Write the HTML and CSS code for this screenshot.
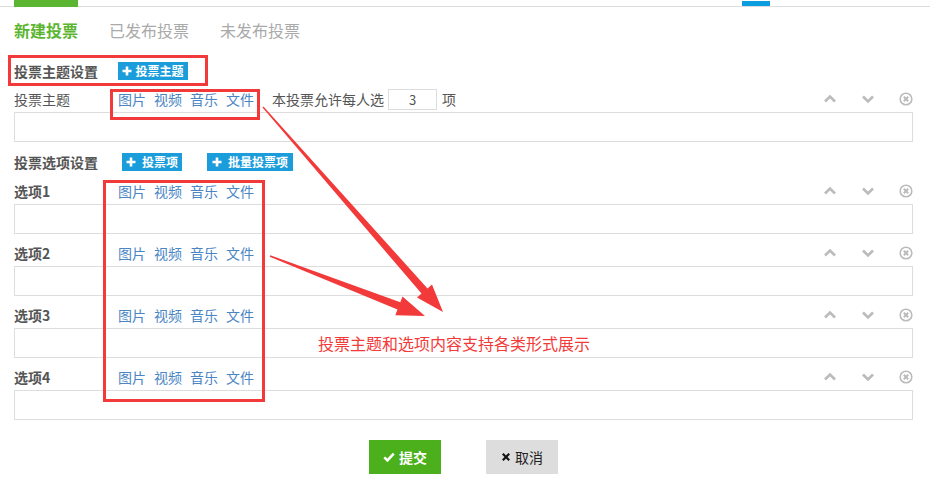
FILE: index.html
```html
<!DOCTYPE html>
<html lang="zh-CN">
<head>
  <meta charset="UTF-8" />
  <title>新建投票</title>
  <link rel="stylesheet" href="styles.css">
</head>
<body>
  <div class="page">
    <span class="stray-bar"></span>
    <nav class="tabs">
      <a class="tab active">新建投票</a>
      <a class="tab">已发布投票</a>
      <a class="tab">未发布投票</a>
    </nav>

    <div class="section-head section-theme">
      <span class="section-title">投票主题设置</span>
      <button class="btn-add btn-theme"><svg class="plus" viewBox="0 0 10 10"><path d="M5 0.5 V9.5 M0.5 5 H9.5" /></svg>投票主题</button>
    </div>

    <div class="field">
      <div class="field-head">
        <span class="field-label">投票主题</span>
        <span class="media-links"><a>图片</a><a>视频</a><a>音乐</a><a>文件</a></span>
        <span class="limit">本投票允许每人选<input class="limit-input" type="text" value="3">项</span>
        <span class="field-tools">
          <svg viewBox="0 0 14 14"><path d="M2 9.5 L7 4.5 L12 9.5" /></svg>
          <svg viewBox="0 0 14 14"><path d="M2 4.5 L7 9.5 L12 4.5" /></svg>
          <svg viewBox="0 0 14 14" class="close"><circle cx="7" cy="7" r="5.8" /><path d="M4.8 4.8 L9.2 9.2 M9.2 4.8 L4.8 9.2" /></svg>
        </span>
      </div>
      <input class="field-input" type="text">
    </div>

    <div class="section-head section-options">
      <span class="section-title">投票选项设置</span>
      <button class="btn-add btn-item"><svg class="plus" viewBox="0 0 10 10"><path d="M5 0.5 V9.5 M0.5 5 H9.5" /></svg>投票项</button>
      <button class="btn-add btn-batch"><svg class="plus" viewBox="0 0 10 10"><path d="M5 0.5 V9.5 M0.5 5 H9.5" /></svg>批量投票项</button>
    </div>

    <div class="field option">
      <div class="field-head">
        <span class="field-label bold">选项1</span>
        <span class="media-links"><a>图片</a><a>视频</a><a>音乐</a><a>文件</a></span>
        <span class="field-tools">
          <svg viewBox="0 0 14 14"><path d="M2 9.5 L7 4.5 L12 9.5" /></svg>
          <svg viewBox="0 0 14 14"><path d="M2 4.5 L7 9.5 L12 4.5" /></svg>
          <svg viewBox="0 0 14 14" class="close"><circle cx="7" cy="7" r="5.8" /><path d="M4.8 4.8 L9.2 9.2 M9.2 4.8 L4.8 9.2" /></svg>
        </span>
      </div>
      <input class="field-input" type="text">
    </div>

    <div class="field option">
      <div class="field-head">
        <span class="field-label bold">选项2</span>
        <span class="media-links"><a>图片</a><a>视频</a><a>音乐</a><a>文件</a></span>
        <span class="field-tools">
          <svg viewBox="0 0 14 14"><path d="M2 9.5 L7 4.5 L12 9.5" /></svg>
          <svg viewBox="0 0 14 14"><path d="M2 4.5 L7 9.5 L12 4.5" /></svg>
          <svg viewBox="0 0 14 14" class="close"><circle cx="7" cy="7" r="5.8" /><path d="M4.8 4.8 L9.2 9.2 M9.2 4.8 L4.8 9.2" /></svg>
        </span>
      </div>
      <input class="field-input" type="text">
    </div>

    <div class="field option">
      <div class="field-head">
        <span class="field-label bold">选项3</span>
        <span class="media-links"><a>图片</a><a>视频</a><a>音乐</a><a>文件</a></span>
        <span class="field-tools">
          <svg viewBox="0 0 14 14"><path d="M2 9.5 L7 4.5 L12 9.5" /></svg>
          <svg viewBox="0 0 14 14"><path d="M2 4.5 L7 9.5 L12 4.5" /></svg>
          <svg viewBox="0 0 14 14" class="close"><circle cx="7" cy="7" r="5.8" /><path d="M4.8 4.8 L9.2 9.2 M9.2 4.8 L4.8 9.2" /></svg>
        </span>
      </div>
      <input class="field-input" type="text">
    </div>

    <div class="field option">
      <div class="field-head">
        <span class="field-label bold">选项4</span>
        <span class="media-links"><a>图片</a><a>视频</a><a>音乐</a><a>文件</a></span>
        <span class="field-tools">
          <svg viewBox="0 0 14 14"><path d="M2 9.5 L7 4.5 L12 9.5" /></svg>
          <svg viewBox="0 0 14 14"><path d="M2 4.5 L7 9.5 L12 4.5" /></svg>
          <svg viewBox="0 0 14 14" class="close"><circle cx="7" cy="7" r="5.8" /><path d="M4.8 4.8 L9.2 9.2 M9.2 4.8 L4.8 9.2" /></svg>
        </span>
      </div>
      <input class="field-input" type="text">
    </div>

    <div class="actions">
      <button class="btn-submit"><svg class="ico" viewBox="0 0 14 14"><path d="M1.5 7.5 L5.2 11 L12.5 3" /></svg>提交</button>
      <button class="btn-cancel"><svg class="ico" viewBox="0 0 14 14"><path d="M2.5 2.5 L11.5 11.5 M11.5 2.5 L2.5 11.5" /></svg>取消</button>
    </div>

    <!-- annotations drawn on top of the screenshot -->
    <svg class="annot" viewBox="0 0 930 481" width="930" height="481">
      <rect x="9.5" y="56.5" width="197" height="28" />
      <rect x="111.5" y="90.5" width="147" height="28" />
      <rect x="104.5" y="181.5" width="159" height="219" />
      <polygon class="arrow" points="263.5,106.5 427.5,288.4 432,284.4 443,312 417,297.6 421.5,293.6 262.5,107.5" />
      <polygon class="arrow" points="270.25,255.35 400.3,302.2 402.5,296.6 425,316 395.3,315.2 397.5,309.6 269.75,256.65" />
    </svg>
    <div class="annot-text">投票主题和选项内容支持各类形式展示</div>
  </div>
</body>
</html>
```

FILE: styles.css
```css
body {
  margin: 0;
  background: #fff;
  color: #555;
  font-family: "Noto Sans CJK SC", "Noto Sans", sans-serif;
  font-size: 14px;
}

.page {
  position: relative;
  width: 930px;
  height: 481px;
  box-sizing: border-box;
  padding: 0 17px 0 14px;
  overflow: hidden;
}

.stray-bar {
  position: absolute;
  left: 742px;
  top: 1px;
  width: 28px;
  height: 5px;
  background: #0a9de0;
}

.tabs {
  display: flex;
  gap: 31px;
  margin: 6px -17px 0 -14px;
  padding: 0 0 0 14px;
  border-top: 1px solid #ddd;
}

.tab {
  position: relative;
  font-size: 16px;
  line-height: 46px;
  color: #aaa;
}

.tab.active {
  color: #5cb531;
  font-weight: bold;
}

.tab.active::before {
  content: "";
  position: absolute;
  left: 0;
  right: 0;
  top: -7px;
  height: 7px;
  background: #5cb531;
}

.section-head {
  display: flex;
  align-items: center;
  height: 24px;
}

.section-theme {
  margin-top: 6px;
}

.section-options {
  margin-top: 8px;
}

.section-title {
  font-weight: bold;
  color: #555;
}

.btn-add {
  display: flex;
  align-items: center;
  justify-content: center;
  gap: 3px;
  height: 18px;
  padding: 0;
  border: none;
  background: #1b9cdb;
  color: #fff;
  font-family: inherit;
  font-size: 12px;
  font-weight: bold;
  line-height: 18px;
}

.btn-add .plus {
  width: 10px;
  height: 10px;
  fill: none;
  stroke: #fff;
  stroke-width: 2.6;
}

.btn-theme {
  width: 70px;
  margin-left: 20px;
}

.btn-item {
  width: 60px;
  margin-left: 24px;
  gap: 6px;
}

.btn-batch {
  width: 86px;
  margin-left: 25px;
  gap: 6px;
}

.field {
  margin-top: 4px;
}

.field.option {
  margin-top: 5px;
}

.field.option + .field.option {
  margin-top: 7px;
}

.field-head {
  display: flex;
  align-items: center;
  height: 24px;
}

.field-label {
  width: 104px;
  color: #555;
}

.field-label.bold {
  font-weight: bold;
}

.media-links {
  display: flex;
  gap: 8px;
}

.media-links a {
  color: #4a85c4;
}

.limit {
  display: flex;
  align-items: center;
  margin-left: 18px;
  color: #555;
}

.limit-input {
  width: 49px;
  height: 21px;
  box-sizing: border-box;
  margin: 0 5px 0 4px;
  padding: 0;
  border: 1px solid #ddd;
  text-align: center;
  font-family: inherit;
  font-size: 13px;
  color: #555;
}

.field-tools {
  display: flex;
  gap: 24px;
  margin-left: auto;
}

.field-tools svg {
  width: 14px;
  height: 14px;
  fill: none;
  stroke: #bbb;
  stroke-width: 2.6;
}

.field-tools svg.close {
  stroke-width: 1.6;
}

.field-tools svg.close path {
  stroke-width: 2;
}

.field-input {
  display: block;
  width: 100%;
  height: 30px;
  box-sizing: border-box;
  margin-top: 1px;
  border: 1px solid #ddd;
  background: #fff;
}

.actions {
  display: flex;
  justify-content: center;
  gap: 45px;
  margin-top: 20px;
}

.actions button {
  display: flex;
  align-items: center;
  justify-content: center;
  gap: 4px;
  width: 72px;
  height: 34px;
  border: none;
  font-family: inherit;
  font-size: 14px;
  font-weight: bold;
}

.actions .ico {
  width: 12px;
  height: 12px;
  fill: none;
  stroke-width: 3;
}

.btn-submit {
  background: #4cb01c;
  color: #fff;
}

.btn-submit .ico {
  stroke: #fff;
}

.actions .btn-cancel {
  background: #ddd;
  color: #222;
  font-weight: normal;
}

.actions .btn-cancel .ico {
  stroke: #111;
  width: 10px;
  height: 10px;
}

.annot {
  position: absolute;
  left: 0;
  top: 0;
  pointer-events: none;
}

.annot rect {
  fill: none;
  stroke: #f33a3a;
  stroke-width: 3;
}

.annot .arrow {
  fill: #f33a3a;
}

.annot-text {
  position: absolute;
  left: 318px;
  top: 331px;
  font-size: 16px;
  line-height: 24px;
  color: #f33a3a;
}
```
